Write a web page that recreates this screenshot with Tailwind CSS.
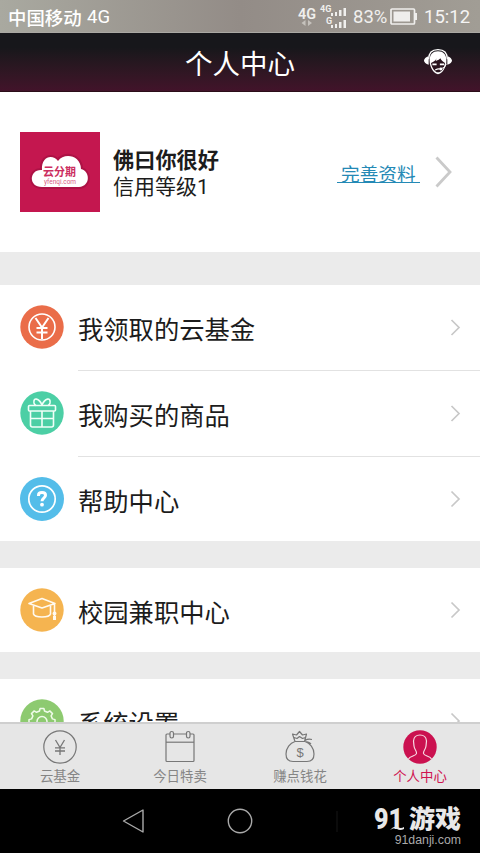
<!DOCTYPE html>
<html lang="zh-CN">
<head>
<meta charset="utf-8">
<title>个人中心</title>
<script src="https://cdn.jsdelivr.net/npm/@tailwindcss/browser@4"></script>
</head>
<body class="w-[480px] h-[853px] overflow-hidden bg-white flex flex-col font-['Noto_Sans_CJK_SC',sans-serif] text-[#1c1c1c]">

<!-- status bar -->
<div class="h-[33px] shrink-0 flex items-center pl-2 pr-[8px] pt-[2px] bg-linear-to-r from-[#a9a9a0] via-[#938c87] to-[#a19d95] text-white whitespace-nowrap border-b border-[#aaa8a3]">
  <span class="text-[18.4px] leading-none w-[79px] shrink-0 font-medium">中国移动</span>
  <span class="font-[Roboto] text-[18.5px] leading-none grow">4G</span>
  <svg class="w-[52px] h-[30px] shrink-0 mr-[4px]" viewBox="0 0 52 30" fill="#f0efed" font-family="Roboto">
    <text x="1" y="16.500" font-size="15" font-weight="600" textLength="18" lengthAdjust="spacingAndGlyphs">4G</text>
    <path d="M8.500 18v6l-4-3zM11 18v6l4-3z" fill="#c5c1bc"/>
    <text x="23" y="10" font-size="9" font-weight="700">4G</text>
    <text x="29" y="22" font-size="9" font-weight="700">G</text>
    <path d="M34 11h2v3h-2zM38 10h2v4h-2zM42 8h2.500v6H42zM46.500 6H49v8h-2.500zM34 23h2v3h-2zM38 22h2v4h-2zM42 20h2.500v6H42zM46.500 18H49v8h-2.500z"/>
  </svg>
  <span class="font-[Roboto] text-[18.5px] leading-none text-[#f0efed] w-[37px] shrink-0">83%</span>
  <svg class="w-[28px] h-[18px] shrink-0 mr-[6px]" viewBox="0 0 28 18" fill="none" stroke="#efeeec"><rect x="1" y="1" width="23.500" height="15" rx="1" stroke-width="1.700"/><rect x="3.500" y="3.500" width="16.500" height="10" fill="#efeeec" stroke="none"/><path d="M26 5v7" stroke-width="2"/></svg>
  <span class="font-[Roboto] text-[18.5px] leading-none text-[#f5f4f3] w-[48px] shrink-0">15:12</span>
</div>

<!-- title bar -->
<header class="h-[59px] shrink-0 grid grid-cols-[1fr_auto_1fr] items-center bg-linear-to-b from-[#17171b] from-25% to-[#42132a] text-white border-b border-[#2b0d18]">
  <span></span>
  <h1 class="text-[27.5px] leading-[40px]">个人中心</h1>
  <svg class="w-[30px] h-[28px] justify-self-end mr-[27px] mt-[-1px]" viewBox="0 0 32 30" fill="none">
    <path d="M6 12C6 5 10 1.700 16 1.700S26 5 26 12" stroke="#fff" stroke-width="1.400"/>
    <path d="M6 9C3 9 1 12 1 13.500s2 4 5 4.500zM26 9c3 0 5 3 5 4.500s-2 4-5 4.500z" fill="#fff"/>
    <path d="M7 14C7 7 10 3.500 16 3.500S25 7 25 14c0 7-5 14-9 14S7 21 7 14z" fill="#fff"/>
    <path d="M8.500 16c3-1 5-3 6-5l-1 3c3-1 4-2 5-3 1 2 3 4 5 5l-1 4c-1 3-3 6-6.500 6s-6.500-5-7.500-10z" fill="#28131d"/>
    <path d="M10 17.500h4.500M18 17.500h4.500" stroke="#fff" stroke-width="1.700"/><path d="M13 23.500q3-1.500 5-1" stroke="#fff" stroke-width="1.200"/><circle cx="19" cy="22.500" r="1.600" fill="#fff"/><path d="M20 22q4-1 5-5" stroke="#fff"/>
  </svg>
</header>

<main class="h-[630px] shrink-0 overflow-hidden bg-[#ebebeb]">
  <!-- profile -->
  <section class="h-[160px] bg-white flex items-center pl-5 pr-[27px]">
    <svg class="w-[80px] h-[80px] shrink-0" viewBox="0 0 80 80">
      <rect width="80" height="80" fill="#c4174f"/>
      <path d="M22 55C8 55 9 37 22 38C21 24 33 22 38 29C44 20 61 23 61 37C70 39 71 54 59 55Z" fill="#fff" stroke="#ad1245" stroke-width="4" paint-order="stroke"/>
      <text x="23" y="44" font-size="11.500" font-weight="700" fill="#cb2d60" textLength="33" lengthAdjust="spacingAndGlyphs">云分期</text>
      <text x="24" y="52" font-family="Roboto" font-size="6.500" fill="#d65c83" textLength="32" lengthAdjust="spacingAndGlyphs">yfenqi.com</text>
    </svg>
    <div class="ml-[13px] grow pt-[1px]">
      <div class="text-[21.2px] leading-[26px] font-bold">佛曰你很好</div>
      <div class="text-[21px] leading-[26px]">信用等级<span class="font-[Roboto]">1</span></div>
    </div>
    <a class="text-[18.7px] leading-[23px] text-[#2489b5] border-b border-[#2489b5] h-[20px] w-[83px] pl-[4px] mt-[20px] mb-[18px] whitespace-nowrap flex items-center">完善资料</a>
    <svg class="w-[18px] h-[32px] ml-[15px]" viewBox="0 0 18 32" fill="none" stroke="#cacaca" stroke-width="2.800"><path d="M1.500 1.500 15 16 1.500 30.500"/></svg>
  </section>

  <section class="mt-[33px] h-[256px] bg-white">
    <div class="h-[86px] pl-5 flex items-center">
      <svg class="w-[44px] h-[44px] shrink-0 -mt-[2px]" viewBox="0 0 44 44" fill="none" stroke="#fff" stroke-width="1.600"><circle cx="22" cy="22" r="21.700" fill="#ea6d49" stroke="none"/><circle cx="22" cy="22" r="13"/><path d="M15.500 13 22 22.500 28.500 13M22 22.500V34M16.500 23h11M16.500 27.500h11" stroke-width="2"/></svg>
      <div class="ml-[14px] grow h-full flex items-center justify-between pr-[19px] border-b border-[#e2e2e2]"><span class="text-[25.3px] leading-none pt-[3px]">我领取的云基金</span><svg class="w-[11px] h-[18px]" viewBox="0 0 11 18" fill="none" stroke="#c8c8c8" stroke-width="1.700"><path d="m1.500 1 7.500 7.500L1.500 16"/></svg></div>
    </div>
    <div class="h-[86px] pl-5 flex items-center">
      <svg class="w-[44px] h-[44px] shrink-0 -mt-[2px]" viewBox="0 0 44 44" fill="none" stroke="#f0fff8" stroke-width="1.600"><circle cx="22" cy="22" r="21.700" fill="#4ccfa5" stroke="none"/><rect x="8.500" y="14.500" width="27" height="5.500" rx="1"/><path d="M10.500 20v14q0 2 2 2h19q2 0 2-2V20M22 20v16M10.500 27.500h23M22 14C19 7 13 6 14 12q.5 2 2 2.500M22 14C25 7 31 6 30 12q-.5 2-2 2.500"/></svg>
      <div class="ml-[14px] grow h-full flex items-center justify-between pr-[19px] border-b border-[#e2e2e2]"><span class="text-[25.3px] leading-none pt-[3px]">我购买的商品</span><svg class="w-[11px] h-[18px]" viewBox="0 0 11 18" fill="none" stroke="#c8c8c8" stroke-width="1.700"><path d="m1.500 1 7.500 7.500L1.500 16"/></svg></div>
    </div>
    <div class="h-[84px] pl-5 flex items-center">
      <svg class="w-[44px] h-[44px] shrink-0" viewBox="0 0 44 44" fill="none" stroke="#fff"><circle cx="22" cy="22" r="22" fill="#54bde9" stroke="none"/><circle cx="22" cy="22" r="13.200" stroke-width="1.700"/><path d="M18.500 19v-.7q0-2.700 3.500-2.700t3.500 2.700c0 3-3.500 2.700-3.500 6" stroke-width="3"/><circle cx="22" cy="27.700" r="1.900" fill="#fff" stroke="none"/></svg>
      <div class="ml-[14px] grow h-full flex items-center justify-between pr-[19px]"><span class="text-[25.3px] leading-none pt-[4px]">帮助中心</span><svg class="w-[11px] h-[18px]" viewBox="0 0 11 18" fill="none" stroke="#c8c8c8" stroke-width="1.700"><path d="m1.500 1.500 7.500 7.500-7.500 7.500"/></svg></div>
    </div>
  </section>

  <section class="mt-[27px] h-[84px] bg-white pl-5 flex items-center">
    <svg class="w-[44px] h-[44px] shrink-0" viewBox="0 0 44 44" fill="none" stroke="#fffaf0" stroke-width="1.600" stroke-linejoin="round"><circle cx="22" cy="22" r="21.700" fill="#f5b450" stroke="none"/><path d="M9 15.500 22 10.500 35 15.500 22 20ZM13.500 18v8q1 3 8.500 3t8.500-3v-8M34.500 16v14"/><circle cx="34.500" cy="25.500" r="1.200" fill="#fff"/><path d="M34.500 28v4" stroke-width="3"/></svg>
    <div class="ml-[14px] grow h-full flex items-center justify-between pr-[19px]"><span class="text-[25.3px] leading-none pt-[4px]">校园兼职中心</span><svg class="w-[11px] h-[18px]" viewBox="0 0 11 18" fill="none" stroke="#c8c8c8" stroke-width="1.700"><path d="m1.500 1.500 7.500 7.500-7.500 7.500"/></svg></div>
  </section>

  <section class="mt-[27px] h-[84px] bg-white pl-5 flex items-center">
    <svg class="w-[44px] h-[44px] shrink-0" viewBox="0 0 44 44" fill="none" stroke="#effbe9" stroke-width="1.500" stroke-linejoin="round"><circle cx="22" cy="22" r="21.700" fill="#8dca70" stroke="none"/><path d="m19.500 12 .6-2.500h3.800l.6 2.500 3 1.300 2.300-1.400 2.700 2.700-1.400 2.300 1.300 3 2.600.7v3.800l-2.600.6-1.300 3 1.400 2.300-2.700 2.700-2.300-1.400-3 1.300-.6 2.600h-3.800l-.6-2.600-3-1.300-2.300 1.400-2.700-2.700 1.400-2.300-1.300-3-2.600-.6v-3.800l2.600-.7 1.300-3-1.400-2.300 2.700-2.700 2.300 1.400z"/><circle cx="22" cy="22.500" r="5"/></svg>
    <div class="ml-[14px] grow h-full flex items-center justify-between pr-[19px]"><span class="text-[25.3px] leading-none pt-[4px]">系统设置</span><svg class="w-[11px] h-[18px]" viewBox="0 0 11 18" fill="none" stroke="#c8c8c8" stroke-width="1.700"><path d="m1.500 1.500 7.500 7.500-7.500 7.500"/></svg></div>
  </section>
</main>

<!-- tabs -->
<nav class="h-[67px] shrink-0 grid grid-cols-4 bg-[#e6e6e6] border-t-2 border-[#cfcfcf] text-[#858585] text-[13.4px] leading-[16px]">
  <div class="flex flex-col items-center pt-[6px] gap-[3px]">
    <svg class="w-[36px] h-[34px]" viewBox="0 0 36 34" fill="none" stroke="#777" stroke-width="1.200"><circle cx="18" cy="17" r="16.200"/><path d="m13.500 10 4.500 7.500 4.500-7.500M18 17.500V25M13 17.800h10M13 21h10" stroke-width="1.300"/></svg>
    <span>云基金</span>
  </div>
  <div class="flex flex-col items-center pt-[6px] gap-[3px]">
    <svg class="w-[36px] h-[34px]" viewBox="0 0 36 34" fill="none" stroke="#777" stroke-width="1.200"><rect x="4" y="4" width="28" height="27.500" rx="1"/><path d="M4 12.200h28"/><rect x="8" y="1.500" width="3.500" height="6.500" rx="1.700" fill="#e6e6e6"/><rect x="24.500" y="1.500" width="3.500" height="6.500" rx="1.700" fill="#e6e6e6"/></svg>
    <span>今日特卖</span>
  </div>
  <div class="flex flex-col items-center pt-[6px] gap-[3px]">
    <svg class="w-[36px] h-[34px]" viewBox="0 0 36 34" fill="none" stroke="#777" stroke-width="1.200" stroke-linejoin="round"><path d="M13 11.500C8 13 4 18 4 24q0 7.500 7 7.500h14q7 0 7-7.500c0-6-4-11-9-12.500zM13 11.500 10.500 4l4 1L17.500 1.500 20.500 5l4-1L22.500 11.500M12 7.500l3 1 2.500-2 3 2 3-1M23 10.500q3-2 7-1M23 11.500q4 0 6 2.500"/><text x="18" y="26.500" text-anchor="middle" font-family="Liberation Sans" font-size="13" fill="#777" stroke="none">$</text></svg>
    <span>赚点钱花</span>
  </div>
  <div class="flex flex-col items-center pt-[6px] gap-[3px] text-[#cf1350]">
    <svg class="w-[36px] h-[34px]" viewBox="0 0 36 34" fill="none" stroke="#f8d9e3" stroke-width="1.200"><circle cx="18" cy="17" r="16.700" fill="#cb1150" stroke="none"/><path d="M6.500 29C8 26 14 26 14.500 23.500C15 21 12.500 20 12 16L11.500 11Q12 5 18 5t6.500 6L24 16c-.5 4-3 5-2.500 7.500C22 26 28 26 29.500 29"/></svg>
    <span>个人中心</span>
  </div>
</nav>

<!-- system navigation -->
<footer class="h-[64px] shrink-0 bg-black flex items-start">
  <svg class="w-[24px] h-[26px] ml-[121px] mt-[19px]" viewBox="0 0 24 26" fill="none" stroke="#aaa" stroke-width="1.400" stroke-linejoin="round"><path d="M2.500 13 22 2v22z"/></svg>
  <svg class="w-[26px] h-[26px] ml-[82px] mt-[19px]" viewBox="0 0 26 26" fill="none" stroke="#aaa" stroke-width="1.400"><circle cx="13" cy="13" r="11.700"/></svg>
  <div class="w-[2px] h-[21px] bg-[#0b0b0b] ml-[83px] mt-[22px]"></div>
  <div class="ml-[36px] mt-[17px] w-[88px] text-[#e8e8e8]">
    <svg class="w-[88px] h-[25px]" viewBox="0 0 88 25" fill="#e8e8e8">
      <text x="0" y="22.500" font-family="Roboto" font-weight="900" font-size="30" textLength="29" lengthAdjust="spacingAndGlyphs">91</text>
      <path d="M16 24q4-5 7.500-3t6.500 0v2q-4 2-7 0t-7 1z"/>
      <text x="35" y="21.500" font-weight="900" font-size="25" textLength="52" lengthAdjust="spacingAndGlyphs">游戏</text>
    </svg>
    <div class="font-['Liberation_Sans'] text-[12.3px] leading-[16px] text-right text-[#aaa] mt-px pr-px">91danji.com</div>
  </div>
</footer>
</body>
</html>
